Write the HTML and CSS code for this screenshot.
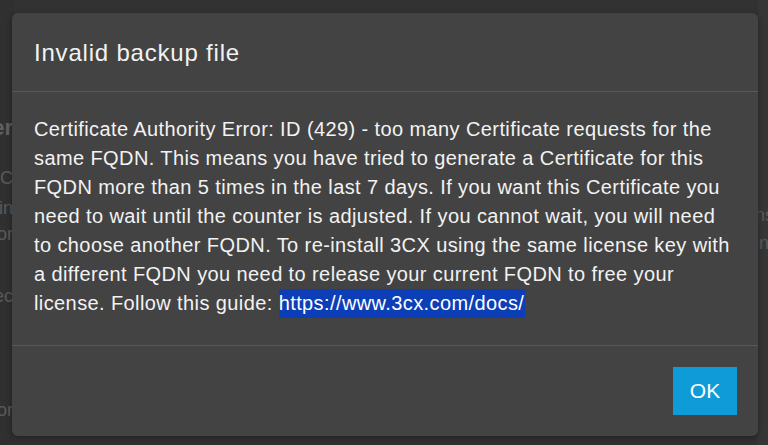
FILE: index.html
```html
<!DOCTYPE html>
<html>
<head>
<meta charset="utf-8">
<link rel="stylesheet" href="styles.css">
</head>
<body>
<div class="page">
  <div class="strip strip-left">
    <div class="bg-line bg-head" style="top:116px">Header</div>
    <div class="bg-line" style="top:166px">Certificate C</div>
    <div class="bg-line" style="top:196px">Domain</div>
    <div class="bg-line" style="top:222px">Registration or</div>
    <div class="bg-line" style="top:284px">Select ec</div>
    <div class="bg-line" style="top:398px">Option or</div>
  </div>
  <div class="strip strip-right">
    <div class="bg-line" style="top:203px">nstall</div>
    <div class="bg-line" style="top:231px">info</div>
  </div>
</div>
<div class="modal">
  <div class="modal-header">
    <h4 class="modal-title">Invalid backup file</h4>
  </div>
  <div class="modal-body">
    Certificate Authority Error: ID (429) - too many Certificate requests for the same FQDN. This means you have tried to generate a Certificate for this FQDN more than 5 times in the last 7 days. If you want this Certificate you need to wait until the counter is adjusted. If you cannot wait, you will need to choose another FQDN. To re-install 3CX using the same license key with a different FQDN you need to release your current FQDN to free your license. Follow this guide: <span class="sel">https://www.3cx.com/docs/</span>
  </div>
  <div class="modal-footer">
    <button class="btn">OK</button>
  </div>
</div>
</body>
</html>
```

FILE: styles.css
```css
html, body {
  margin: 0;
  padding: 0;
  width: 768px;
  height: 445px;
  overflow: hidden;
  background: #323232;
  font-family: "Liberation Sans", Arial, sans-serif;
}
.page {
  position: relative;
  width: 768px;
  height: 445px;
}
.strip {
  position: absolute;
  top: 0;
  height: 445px;
  overflow: hidden;
}
.strip-left {
  left: 0;
  width: 14px;
  background: #303030;
}
.strip-right {
  left: 758px;
  width: 10px;
  background: #363636;
}
.bg-line {
  position: absolute;
  white-space: nowrap;
  font-size: 18px;
  color: #5a5a5a;
  line-height: 24px;
}
.strip-left .bg-line {
  right: 1px;
}
.strip-right .bg-line {
  left: -3px;
}
.bg-head {
  font-weight: bold;
  font-size: 22px;
  color: #606060;
}
.modal {
  position: absolute;
  left: 12px;
  top: 13px;
  width: 746px;
  height: 423px;
  box-sizing: border-box;
  background: #434343;
  border-radius: 6px;
  box-shadow: 0 2px 6px rgba(0,0,0,0.35);
  display: flex;
  flex-direction: column;
  color: #f2f2f2;
}
.modal-header {
  padding: 27px 22px 25px;
  border-bottom: 1px solid #585858;
}
.modal-title {
  margin: 0;
  font-size: 24px;
  font-weight: normal;
  line-height: 26px;
  letter-spacing: 0.8px;
}
.modal-body {
  padding: 23px 24px 0 22px;
  font-size: 20px;
  line-height: 29px;
  letter-spacing: 0.4px;
  flex: 1;
}
.sel {
  background: #0b3eb7;
  color: #ffffff;
  padding: 3px 1px 4px 0;
}
.modal-footer {
  padding: 21px 21px 21px;
  border-top: 1px solid #585858;
  display: flex;
  justify-content: flex-end;
}
.btn {
  width: 64px;
  height: 48px;
  border: none;
  border-radius: 0;
  background: #0f9bd7;
  color: #ffffff;
  font-family: "Liberation Sans", Arial, sans-serif;
  font-size: 21px;
  padding: 0;
}
```
